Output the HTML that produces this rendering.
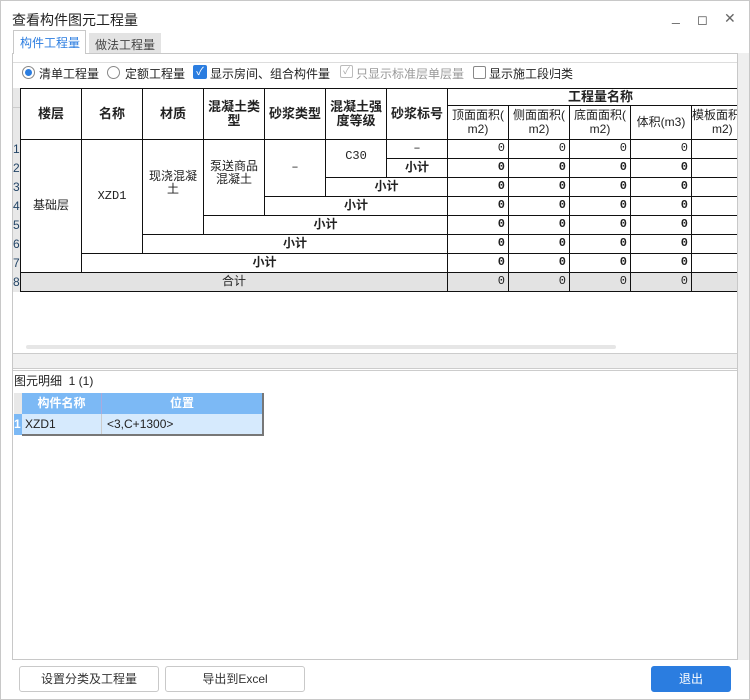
<!DOCTYPE html>
<html><head><meta charset="utf-8"><style>
*{margin:0;padding:0;box-sizing:border-box}
body{width:750px;height:700px;overflow:hidden;background:#fff;font-family:"Liberation Sans","Noto Sans CJK SC",sans-serif;font-size:12px;color:#222;position:relative}
.a{position:absolute}
table{border-collapse:collapse;table-layout:fixed}
.g td{border:1px solid #111;height:19px;font-size:12px;text-align:center;padding:0;line-height:1.1;font-family:"Liberation Mono","Noto Sans CJK SC",monospace}
.g td.n{text-align:right;padding-right:3px}
.g .b{font-weight:bold}
.g .h{font-weight:bold;font-size:13px;font-family:"Liberation Sans","Noto Sans CJK SC",sans-serif}
.g .s{font-size:12px;font-family:"Liberation Sans","Noto Sans CJK SC",sans-serif}
.g tr.t td{background:#e3e3e3}
.btn{position:absolute;top:666px;height:26px;border:1px solid #c9c9c9;border-radius:3px;background:#fff;text-align:center;line-height:24px;font-size:12px;color:#333}
</style></head><body>
<div class="a" style="left:0;top:0;width:750px;height:700px;border:1px solid #c8c8c8"></div>
<div class="a" style="left:12px;top:10px;font-size:14px;color:#222">查看构件图元工程量</div>
<div class="a" style="left:697px;top:12px;color:#555;font-size:13px">&#9723;</div>
<div class="a" style="left:672px;top:8px;color:#666;font-size:14px">_</div>
<div class="a" style="left:724px;top:10px;color:#666;font-size:14px">✕</div>
<div class="a" style="left:13px;top:30px;width:73px;height:24px;border:1px solid #c8c8c8;border-bottom:none;background:#fff;color:#2b7de0;font-size:12px;padding:3px 0 0 6px;z-index:2">构件工程量</div>
<div class="a" style="left:89px;top:33px;width:72px;height:21px;background:#e3e3e3;color:#444;font-size:12px;padding:3px 0 0 6px">做法工程量</div>
<div class="a" style="left:12px;top:53px;width:726px;height:607px;border:1px solid #c8c8c8"></div>
<div class="a" style="left:738px;top:53px;width:11px;height:607px;background:#efefef"></div>
<div class="a" style="left:13px;top:62px;width:724px;height:292px;border-top:1px solid #ddd"></div>
<div class="a" style="left:22px;top:66px;width:13px;height:13px;border:1px solid #888;border-radius:50%"><div style="margin:2px;width:7px;height:7px;border-radius:50%;background:#2b7de0"></div></div>
<div class="a" style="left:39px;top:65px">清单工程量</div>
<div class="a" style="left:107px;top:66px;width:13px;height:13px;border:1px solid #888;border-radius:50%"></div>
<div class="a" style="left:125px;top:65px">定额工程量</div>
<div class="a" style="left:193px;top:65px;width:14px;height:14px;background:#2b7de0;border-radius:2px;color:#fff;font-size:11px;line-height:14px;text-align:center">✓</div>
<div class="a" style="left:210px;top:65px">显示房间、组合构件量</div>
<div class="a" style="left:340px;top:65px;width:13px;height:13px;border:1px solid #bbb;border-radius:2px;color:#aaa;font-size:10px;line-height:12px;text-align:center">✓</div>
<div class="a" style="left:356px;top:65px;color:#999">只显示标准层单层量</div>
<div class="a" style="left:473px;top:66px;width:13px;height:13px;border:1px solid #888;border-radius:2px"></div>
<div class="a" style="left:489px;top:65px">显示施工段归类</div>
<div class="a" style="left:13px;top:88px;width:8px;height:204px;background:#e8e8e8;border-right:1px solid #ccc"></div>
<div class="a" style="left:13px;top:107px;width:8px;height:1px;background:#ccc"></div>
<div class="a" style="left:13px;top:140px;width:8px;font-size:12px;line-height:19px;color:#246">1<br>2<br>3<br>4<br>5<br>6<br>7<br>8</div>
<div class="a" style="left:20px;top:88px;width:717px;height:205px;overflow:hidden">
<table class="g" style="width:733px">
<colgroup><col style="width:61px"><col style="width:61px"><col style="width:61px"><col style="width:61px"><col style="width:61px"><col style="width:61px"><col style="width:61px"><col style="width:61px"><col style="width:61px"><col style="width:61px"><col style="width:61px"><col style="width:62px"></colgroup>
<tr style="height:17px"><td rowspan="2" class="h">楼层</td><td rowspan="2" class="h">名称</td><td rowspan="2" class="h">材质</td><td rowspan="2" class="h">混凝土类<br>型</td><td rowspan="2" class="h">砂浆类型</td><td rowspan="2" class="h">混凝土强<br>度等级</td><td rowspan="2" class="h">砂浆标号</td><td colspan="5" class="h" style="height:17px">工程量名称</td></tr>
<tr style="height:34px"><td class="s">顶面面积(<br>m2)</td><td class="s">侧面面积(<br>m2)</td><td class="s">底面面积(<br>m2)</td><td class="s">体积(m3)</td><td class="s" style="text-align:left">模板面积(<br>&nbsp;&nbsp;&nbsp;&nbsp;&nbsp;&nbsp;m2)</td></tr>
<tr><td rowspan="7" class="s">基础层</td><td rowspan="6">XZD1</td><td rowspan="5" class="s" style="vertical-align:top;padding-top:30px">现浇混凝<br>土</td><td rowspan="4" class="s" style="vertical-align:top;padding-top:20px">泵送商品<br>混凝土</td><td rowspan="3">–</td><td rowspan="2" style="vertical-align:top;padding-top:10px">C30</td><td>–</td><td class="n">0</td><td class="n">0</td><td class="n">0</td><td class="n">0</td><td></td></tr>
<tr><td class="b s">小计</td><td class="n b">0</td><td class="n b">0</td><td class="n b">0</td><td class="n b">0</td><td></td></tr>
<tr><td colspan="2" class="b s">小计</td><td class="n b">0</td><td class="n b">0</td><td class="n b">0</td><td class="n b">0</td><td></td></tr>
<tr><td colspan="3" class="b s">小计</td><td class="n b">0</td><td class="n b">0</td><td class="n b">0</td><td class="n b">0</td><td></td></tr>
<tr><td colspan="4" class="b s">小计</td><td class="n b">0</td><td class="n b">0</td><td class="n b">0</td><td class="n b">0</td><td></td></tr>
<tr><td colspan="5" class="b s">小计</td><td class="n b">0</td><td class="n b">0</td><td class="n b">0</td><td class="n b">0</td><td></td></tr>
<tr><td colspan="6" class="b s">小计</td><td class="n b">0</td><td class="n b">0</td><td class="n b">0</td><td class="n b">0</td><td></td></tr>
<tr class="t"><td colspan="7" class="s">合计</td><td class="n">0</td><td class="n">0</td><td class="n">0</td><td class="n">0</td><td></td></tr>
</table></div>
<div class="a" style="left:26px;top:345px;width:590px;height:4px;background:#e6e6e6;border-radius:2px"></div>
<div class="a" style="left:13px;top:353px;width:724px;height:16px;background:#f0f0f0;border-top:1px solid #ccc;border-bottom:1px solid #ccc"></div>
<div class="a" style="left:13px;top:370px;width:724px;height:289px;border-top:1px solid #ccc"></div>
<div class="a" style="left:14px;top:372px;font-size:12px">图元明细&nbsp;&nbsp;1 (1)</div>
<div class="a" style="left:14px;top:393px;width:8px;height:42px;background:#e8e8e8"></div>
<div class="a" style="left:14px;top:414px;width:8px;height:21px;background:#7cb9f5;color:#fff;font-weight:bold;font-size:12px;line-height:21px">1</div>
<div class="a" style="left:22px;top:393px;width:242px;height:43px;border-right:2px solid #777;border-bottom:2px solid #777">
<div class="a" style="left:0;top:0;width:80px;height:21px;background:#7cb9f5;color:#fff;font-weight:bold;text-align:center;line-height:21px;border-right:1px solid #aad">构件名称</div>
<div class="a" style="left:80px;top:0;width:160px;height:21px;background:#7cb9f5;color:#fff;font-weight:bold;text-align:center;line-height:21px">位置</div>
<div class="a" style="left:0;top:21px;width:80px;height:20px;background:#d6eafd;line-height:20px;padding-left:3px;border-right:1px solid #ccc">XZD1</div>
<div class="a" style="left:80px;top:21px;width:160px;height:20px;background:#d6eafd;line-height:20px;padding-left:5px">&lt;3,C+1300&gt;</div>
</div>
<div class="btn" style="left:19px;width:140px">设置分类及工程量</div>
<div class="btn" style="left:165px;width:140px">导出到Excel</div>
<div class="btn" style="left:651px;width:80px;background:#2b7de0;border-color:#2b7de0;color:#fff">退出</div>
</body></html>
